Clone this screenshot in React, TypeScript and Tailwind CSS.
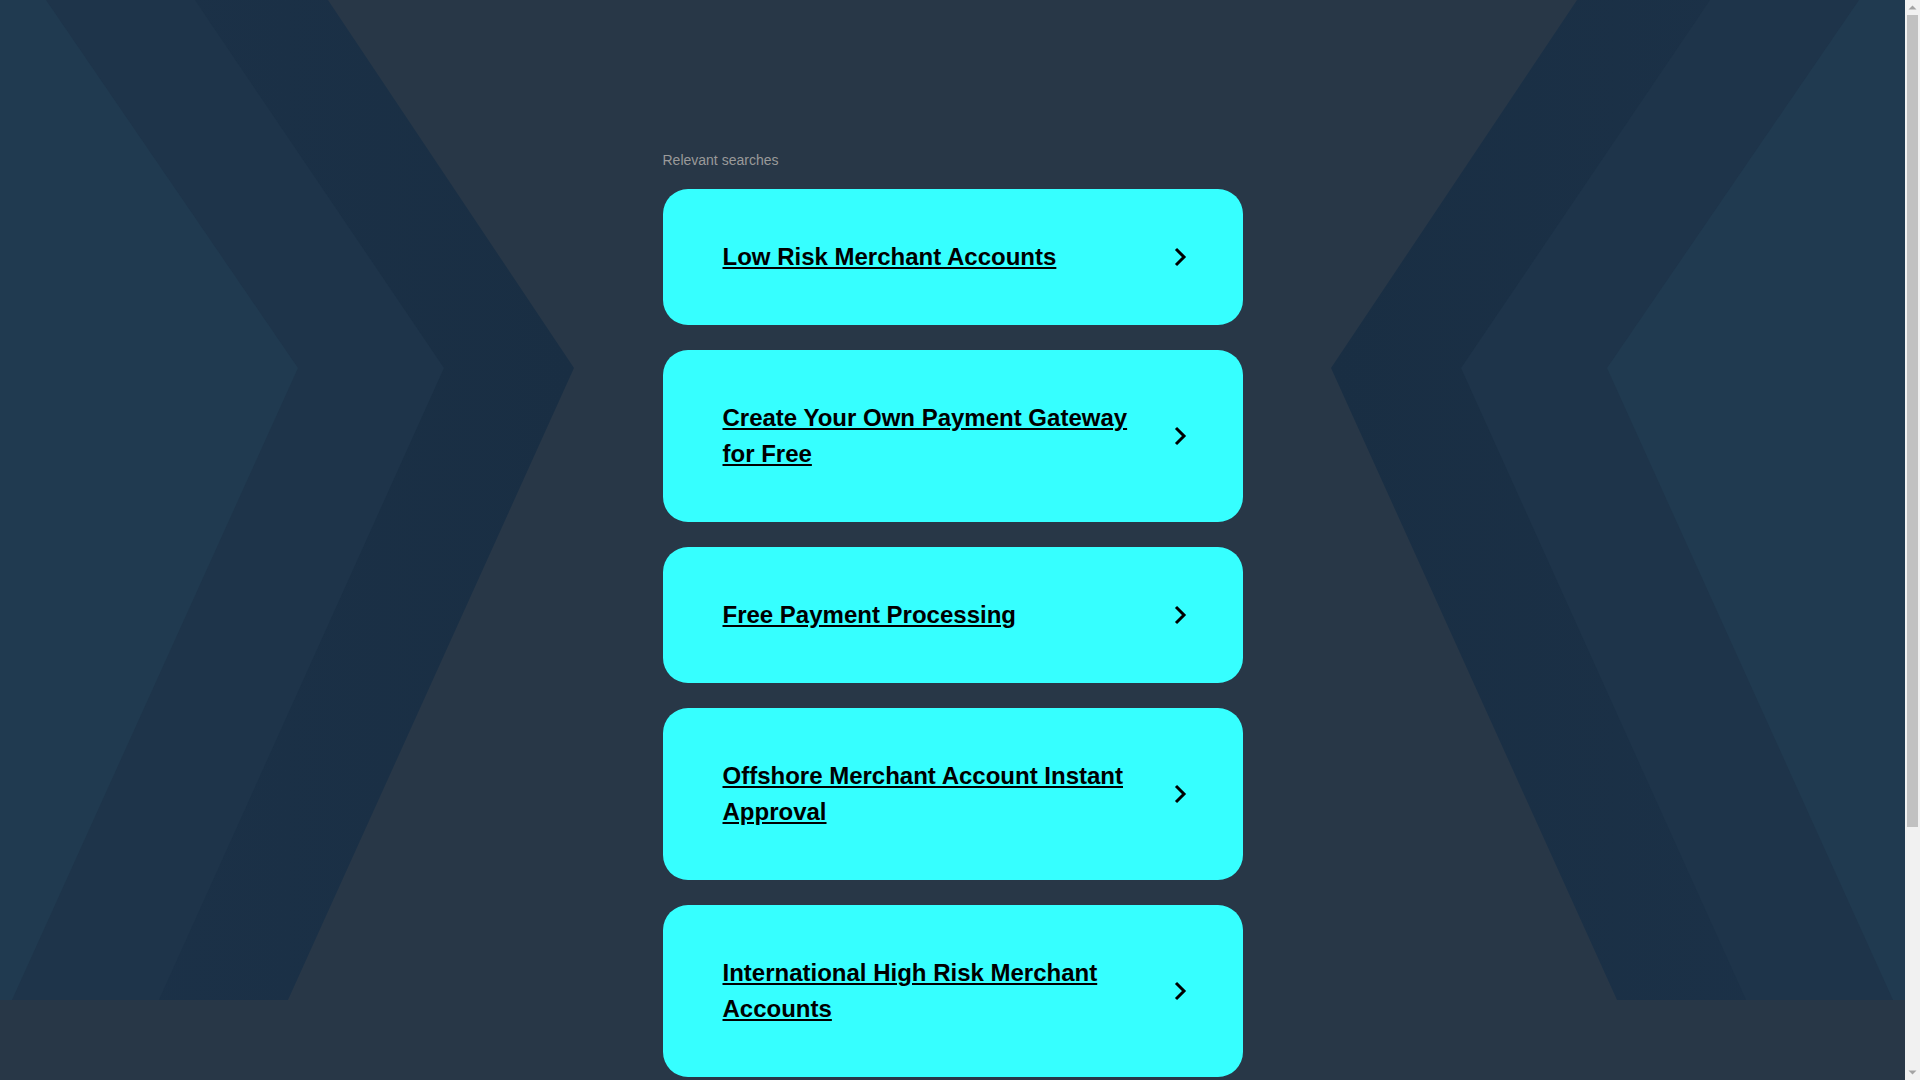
import React from "react";

const SEARCHES: string[] = [
  "Low Risk Merchant Accounts",
  "Create Your Own Payment Gateway for Free",
  "Free Payment Processing",
  "Offshore Merchant Account Instant Approval",
  "International High Risk Merchant Accounts",
];

const Backdrop: React.FC = () => (
  <svg
    className="absolute left-0 top-0 h-[1000px] w-full"
    viewBox="0 0 1905 1000"
    preserveAspectRatio="xMidYMin slice"
    aria-hidden="true"
  >
    <defs>
      <linearGradient id="outerL" x1="0" x2="1" y1="0" y2="0">
        <stop offset="0" stopColor="#1c3249" />
        <stop offset="1" stopColor="#192e43" />
      </linearGradient>
      <linearGradient id="outerR" x1="1" x2="0" y1="0" y2="0">
        <stop offset="0" stopColor="#1c3249" />
        <stop offset="1" stopColor="#192e43" />
      </linearGradient>
    </defs>
    {/* left chevrons */}
    <polygon points="0,0 328,0 574,368 288,1000 0,1000" fill="url(#outerL)" />
    <polygon points="0,0 195,0 444,368 159,1000 0,1000" fill="#1e344a" />
    <polygon points="0,0 46,0 298,368 12,1000 0,1000" fill="#203a50" />
    {/* right chevrons */}
    <polygon points="1905,0 1577,0 1331,368 1617,1000 1905,1000" fill="url(#outerR)" />
    <polygon points="1905,0 1710,0 1461,368 1746,1000 1905,1000" fill="#1e344a" />
    <polygon points="1905,0 1859,0 1607,368 1893,1000 1905,1000" fill="#203a50" />
  </svg>
);

const Chevron: React.FC = () => (
  <svg width="14" height="20" viewBox="0 0 14 20" className="shrink-0">
    <path d="M3 2 L11 10 L3 18" fill="none" stroke="#000" strokeWidth="3" />
  </svg>
);

const Scrollbar: React.FC = () => (
  <aside className="flex h-[1080px] w-[15px] shrink-0 flex-col items-center bg-[#f1f1f1]">
    <svg width="15" height="15" viewBox="0 0 15 15">
      <path d="M3.5 9.5 L7.5 5.5 L11.5 9.5 Z" fill="#a3a3a3" />
    </svg>
    <div className="h-[812px] w-[11px] bg-[#c1c1c1]" />
    <div className="flex-1" />
    <svg width="15" height="15" viewBox="0 0 15 15">
      <path d="M3.5 5.5 L7.5 9.5 L11.5 5.5 Z" fill="#a3a3a3" />
    </svg>
  </aside>
);

export default function App() {
  return (
    <div className="flex bg-[#283747] font-['Liberation_Sans',Arial,sans-serif]">
      <div className="relative min-h-[1400px] flex-1">
        <Backdrop />
        <main className="relative mx-auto w-[580px] pt-[150px]">
          <p className="mb-[19px] text-[14px] leading-[20px] text-[#9a9a9a]">
            Relevant searches
          </p>
          <div className="flex flex-col gap-[25px]">
            {SEARCHES.map((s) => (
              <a
                key={s}
                href="#"
                className="flex items-center rounded-[25px] bg-[#36ffff] py-[50px] pl-[60px] pr-[56px]"
              >
                <span className="flex-1 pr-[30px] text-[24px] font-bold leading-[36px] text-black underline">
                  {s}
                </span>
                <Chevron />
              </a>
            ))}
          </div>
        </main>
      </div>
      <Scrollbar />
    </div>
  );
}
